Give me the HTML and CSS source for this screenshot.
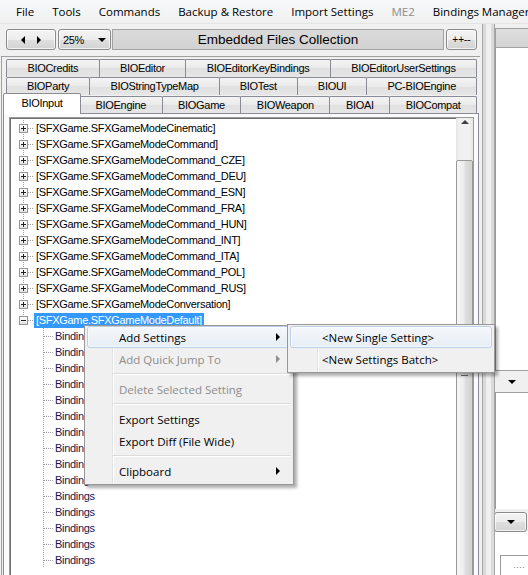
FILE: index.html
```html
<!DOCTYPE html>
<html lang="en">
<head>
  <meta charset="UTF-8" />
  <title>Bindings Editor</title>
  <link rel="stylesheet" href="styles.css">
</head>
<body>
  <div class="menubar">
    <span>File</span>
    <span>Tools</span>
    <span>Commands</span>
    <span>Backup &amp; Restore</span>
    <span>Import Settings</span>
    <span class="off">ME2</span>
    <span>Bindings Manager</span>
  </div>

  <div class="main">
    <div class="left">
      <div class="toolbar">
        <div class="btn nav"><i class="tri-l"></i><i class="tri-r"></i></div>
        <div class="btn combo"><span>25%</span><i class="tri-d"></i></div>
        <div class="caption">Embedded Files Collection</div>
        <div class="btn small">++--</div>
      </div>

      <div class="tabhost">
        <div class="tabrow r1">
          <span class="tab">BIOCredits</span>
          <span class="tab">BIOEditor</span>
          <span class="tab">BIOEditorKeyBindings</span>
          <span class="tab">BIOEditorUserSettings</span>
        </div>
        <div class="tabrow r2">
          <span class="tab">BIOParty</span>
          <span class="tab">BIOStringTypeMap</span>
          <span class="tab">BIOTest</span>
          <span class="tab">BIOUI</span>
          <span class="tab">PC-BIOEngine</span>
        </div>
        <div class="tabrow r3">
          <span class="tab active">BIOInput</span>
          <span class="tab">BIOEngine</span>
          <span class="tab">BIOGame</span>
          <span class="tab">BIOWeapon</span>
          <span class="tab">BIOAI</span>
          <span class="tab">BIOCompat</span>
        </div>

        <div class="tabpage">
          <div class="tree">
            <div class="tree-body">
              <div class="roots">
                <div class="node"><i class="exp"></i><span class="lbl">[SFXGame.SFXGameModeCinematic]</span></div>
                <div class="node"><i class="exp"></i><span class="lbl">[SFXGame.SFXGameModeCommand]</span></div>
                <div class="node"><i class="exp"></i><span class="lbl">[SFXGame.SFXGameModeCommand_CZE]</span></div>
                <div class="node"><i class="exp"></i><span class="lbl">[SFXGame.SFXGameModeCommand_DEU]</span></div>
                <div class="node"><i class="exp"></i><span class="lbl">[SFXGame.SFXGameModeCommand_ESN]</span></div>
                <div class="node"><i class="exp"></i><span class="lbl">[SFXGame.SFXGameModeCommand_FRA]</span></div>
                <div class="node"><i class="exp"></i><span class="lbl">[SFXGame.SFXGameModeCommand_HUN]</span></div>
                <div class="node"><i class="exp"></i><span class="lbl">[SFXGame.SFXGameModeCommand_INT]</span></div>
                <div class="node"><i class="exp"></i><span class="lbl">[SFXGame.SFXGameModeCommand_ITA]</span></div>
                <div class="node"><i class="exp"></i><span class="lbl">[SFXGame.SFXGameModeCommand_POL]</span></div>
                <div class="node"><i class="exp"></i><span class="lbl">[SFXGame.SFXGameModeCommand_RUS]</span></div>
                <div class="node"><i class="exp"></i><span class="lbl">[SFXGame.SFXGameModeConversation]</span></div>
                <div class="node sel"><i class="exp open"></i><span class="lbl">[SFXGame.SFXGameModeDefault]</span></div>
              </div>
              <div class="children">
                <div class="leaf"><span class="lbl">Bindings</span></div>
                <div class="leaf"><span class="lbl">Bindings</span></div>
                <div class="leaf"><span class="lbl">Bindings</span></div>
                <div class="leaf"><span class="lbl">Bindings</span></div>
                <div class="leaf"><span class="lbl">Bindings</span></div>
                <div class="leaf"><span class="lbl">Bindings</span></div>
                <div class="leaf"><span class="lbl">Bindings</span></div>
                <div class="leaf"><span class="lbl">Bindings</span></div>
                <div class="leaf"><span class="lbl">Bindings</span></div>
                <div class="leaf"><span class="lbl">Bindings</span></div>
                <div class="leaf"><span class="lbl">Bindings</span></div>
                <div class="leaf"><span class="lbl">Bindings</span></div>
                <div class="leaf"><span class="lbl">Bindings</span></div>
                <div class="leaf"><span class="lbl">Bindings</span></div>
                <div class="leaf"><span class="lbl">Bindings</span></div>
              </div>
            </div>
            <div class="vscroll">
              <div class="sb-up"><i class="tri-u"></i></div>
              <div class="sb-track"></div>
              <div class="sb-thumb"></div>
            </div>
          </div>
        </div>
      </div>
    </div>

    <div class="splitter"></div>

    <div class="right">
      <div class="r-head"></div>
      <div class="r-white"></div>
      <div class="r-strip"><i class="tri-d"></i></div>
      <div class="r-white short"></div>
      <div class="btn r-btn"><i class="tri-d"></i></div>
      <div class="r-bottom"><div class="mini">····</div></div>
    </div>
  </div>

  <!-- context menu opened on the selected node -->
  <div class="ctx">
    <div class="item hot">Add Settings<i class="tri-m"></i></div>
    <div class="item dis">Add Quick Jump To<i class="tri-m"></i></div>
    <div class="sep"></div>
    <div class="item dis">Delete Selected Setting</div>
    <div class="sep"></div>
    <div class="item">Export Settings</div>
    <div class="item">Export Diff (File Wide)</div>
    <div class="sep"></div>
    <div class="item">Clipboard<i class="tri-m"></i></div>
  </div>

  <div class="ctx sub">
    <div class="item hot">&lt;New Single Setting&gt;</div>
    <div class="item">&lt;New Settings Batch&gt;</div>
  </div>
</body>
</html>
```

FILE: styles.css
```css
body {
  margin: 0;
  width: 528px;
  height: 575px;
  overflow: hidden;
  position: relative;
  background: #f0f0f0;
  font-family: "Liberation Sans", Arial, sans-serif;
  font-size: 11px;
  color: #000;
}
i {
  display: block;
  font-style: normal;
}

/* menu bar */
.menubar {
  height: 23px;
  display: flex;
  align-items: center;
  padding-left: 7px;
  white-space: nowrap;
  overflow: hidden;
  font-family: "Open Sans", sans-serif;
  font-size: 11.5px;
  background: linear-gradient(#f7f8fa, #f0f0f0);
  border-bottom: 1px solid #e4e4e4;
}
.menubar span {
  padding: 0 9px;
  flex: none;
}
.menubar .off {
  color: #8d8d8d;
}

.main {
  display: flex;
  height: 551px;
}
.left {
  width: 482px;
  flex: none;
}

/* toolbar */
.toolbar {
  display: flex;
  height: 21px;
  margin: 5px 0 0 6px;
}
.btn {
  box-sizing: border-box;
  border: 1px solid #8a8a8a;
  border-radius: 3px;
  background: linear-gradient(#f4f4f4, #ececec 50%, #dfdfdf 50%, #d3d3d3);
  box-shadow: inset 0 0 0 1px rgba(255,255,255,0.7);
  display: flex;
  align-items: center;
}
.nav {
  width: 50px;
  margin-right: 2px;
  justify-content: center;
  gap: 12px;
}
.tri-l {
  border-right: 4px solid #000;
  border-top: 4px solid transparent;
  border-bottom: 4px solid transparent;
}
.tri-r, .tri-m {
  border-left: 4px solid #000;
  border-top: 4px solid transparent;
  border-bottom: 4px solid transparent;
}
.tri-d {
  border-top: 4px solid #000;
  border-left: 4px solid transparent;
  border-right: 4px solid transparent;
}
.tri-u {
  border-bottom: 4px solid #404040;
  border-left: 4px solid transparent;
  border-right: 4px solid transparent;
}
.combo {
  width: 53px;
  margin-right: 1px;
  padding: 0 4px;
  justify-content: space-between;
  letter-spacing: -0.4px;
}
.caption {
  box-sizing: border-box;
  width: 332px;
  margin-right: 2px;
  border: 1px solid #a3a3a3;
  background: linear-gradient(#dadada, #d2d2d2);
  text-align: center;
  line-height: 19px;
  font-size: 13.5px;
}
.small {
  width: 31px;
  justify-content: center;
  font-size: 10px;
}

/* tabs */
.tabhost {
  width: 478px;
  margin: 6px 0 0 1px;
  border-top: 1px solid #a0a0a0;
  border-left: 1px solid #a0a0a0;
}
.tabrow {
  display: flex;
  height: 18px;
  padding: 0 3px 0 4px;
}
.r1 {
  margin-top: 2px;
}
.r3 {
  padding-left: 1px;
  align-items: flex-end;
}
.tab {
  flex: 1 1 auto;
  box-sizing: border-box;
  height: 18px;
  margin-left: -1px;
  padding: 0 5px;
  border: 1px solid #898c95;
  border-bottom: 0;
  border-radius: 2px 2px 0 0;
  background: linear-gradient(#f4f4f4, #eaeaea 50%, #e0e0e0 50%, #e6e6e6);
  text-align: center;
  line-height: 16px;
  letter-spacing: -0.3px;
  white-space: nowrap;
}
.tab:first-child {
  margin-left: 0;
}
.r3 .tab {
  height: 17px;
}
.r3 .tab.active {
  height: 21px;
  margin-bottom: -1px;
  margin-right: -1px;
  padding: 0 7px;
  background: #fff;
  line-height: 18px;
  position: relative;
  z-index: 2;
}

.tabpage {
  box-sizing: border-box;
  width: 476px;
  height: 470px;
  margin-left: 1px;
  padding: 3px 4px 0 5px;
  border: 1px solid #898c95;
  background: #fbfbfb;
}

/* tree view */
.tree {
  box-sizing: border-box;
  height: 470px;
  display: flex;
  border: 1px solid #9a9a9a;
  box-shadow: inset 1px 1px 0 #707070;
  background: #fff;
}
.tree-body {
  flex: 1;
  padding-top: 2px;
}
.roots {
  background: repeating-linear-gradient(#a0a0a0 0 1px, transparent 1px 2px) 13px 0 / 1px 200px no-repeat;
}
.node {
  height: 16px;
  display: flex;
  align-items: center;
  padding-left: 9px;
  background: repeating-linear-gradient(to right, #a0a0a0 0 1px, transparent 1px 2px) 18px 8px / 6px 1px no-repeat;
}
.exp {
  box-sizing: border-box;
  width: 9px;
  height: 9px;
  margin-right: 6px;
  border: 1px solid #969696;
  background:
    linear-gradient(#222, #222) center / 5px 1px no-repeat,
    linear-gradient(#222, #222) center / 1px 5px no-repeat,
    linear-gradient(#fff, #e4e4e4);
}
.exp.open {
  background:
    linear-gradient(#222, #222) center / 5px 1px no-repeat,
    linear-gradient(#fff, #e4e4e4);
}
.lbl {
  padding: 0 2px;
  line-height: 15px;
  letter-spacing: -0.3px;
  white-space: nowrap;
}
.sel .lbl {
  background: #3399ff;
  color: #fff;
}
.children {
  background: repeating-linear-gradient(#a0a0a0 0 1px, transparent 1px 2px) 33px 0 / 1px 100% no-repeat;
}
.leaf {
  height: 16px;
  display: flex;
  align-items: center;
  padding-left: 43px;
  background: repeating-linear-gradient(to right, #a0a0a0 0 1px, transparent 1px 2px) 34px 8px / 9px 1px no-repeat;
}
.leaf .lbl {
  color: #16164f;
}

/* scrollbar */
.vscroll {
  width: 17px;
  flex: none;
  display: flex;
  flex-direction: column;
  background: linear-gradient(to right, #e4e4e4, #f1f1f1 3px, #f1f1f1 13px, #e9e9e9);
}
.sb-up {
  height: 20px;
  display: flex;
  align-items: center;
  justify-content: center;
}
.sb-track {
  height: 84px;
}
.sb-thumb {
  height: 426px;
  flex: none;
  box-sizing: border-box;
  border: 1px solid #999;
  border-radius: 2px;
  background:
    repeating-linear-gradient(#6e6e6e 0 1px, transparent 1px 3px) center 208px / 7px 7px no-repeat,
    linear-gradient(to right, #f6f6f6, #ededed 45%, #dedede 55%, #d2d2d2);
}

/* splitter + right panel */
.splitter {
  width: 13px;
  flex: none;
  box-sizing: border-box;
  border-left: 1px solid #a6a6a6;
  border-right: 1px solid #a6a6a6;
  background: linear-gradient(to right, #d9d9d9 0 3px, #f0f0f0 3px 8px, #dadada 8px);
}
.right {
  flex: 1;
  display: flex;
  flex-direction: column;
  overflow: hidden;
}
.right > div {
  flex: none;
}
.r-head {
  height: 20px;
  margin-top: 4px;
  box-sizing: border-box;
  border: 1px solid #a0a0a0;
  border-right: 0;
  background: linear-gradient(#dedede, #d3d3d3);
}
.r-white {
  height: 322px;
  background: #fff;
  border-left: 1px solid #9a9a9a;
}
.r-white.short {
  height: 116px;
}
.r-strip {
  height: 23px;
  box-sizing: border-box;
  border-top: 1px solid #a0a0a0;
  border-bottom: 1px solid #a0a0a0;
  display: flex;
  align-items: center;
  justify-content: center;
}
.r-btn {
  height: 20px;
  margin: 3px 1px 0 -1px;
  justify-content: center;
}
.right > .r-bottom {
  flex: 1;
  min-height: 0;
  background: #fff;
  padding: 23px 0 0 5px;
}
.mini {
  height: 40px;
  border: 1px solid #9a9a9a;
  border-right: 0;
  color: #777;
  font-size: 9px;
  padding: 6px 0 0 12px;
}

/* context menus */
.ctx {
  position: absolute;
  left: 84px;
  top: 325px;
  width: 210px;
  box-sizing: border-box;
  padding: 0 2px 2px;
  border: 1px solid #979797;
  background:
    linear-gradient(to right, transparent 27px, #e2e3e3 27px 28px, #fff 28px 29px, transparent 29px),
    #f0f0f0;
  box-shadow: 3px 3px 3px rgba(0,0,0,0.32);
  font-family: "Open Sans", sans-serif;
  font-size: 11.5px;
  z-index: 5;
}
.ctx .item {
  height: 22px;
  box-sizing: border-box;
  display: flex;
  align-items: center;
  padding: 0 10px 0 31px;
  border: 1px solid transparent;
  border-radius: 3px;
  white-space: nowrap;
}
.ctx .item i {
  margin-left: auto;
}
.ctx .hot {
  border-color: #b9cfe8;
  background: linear-gradient(#f5f8fc, #e6edf6);
  box-shadow: inset 0 0 0 1px rgba(255,255,255,0.6);
}
.ctx .dis {
  color: #8d8d8d;
}
.ctx .dis i {
  border-left-color: #8d8d8d;
}
.ctx .sep {
  height: 8px;
  margin-left: 26px;
  background:
    linear-gradient(#dcdcdc, #dcdcdc) 0 3px / 100% 1px no-repeat,
    linear-gradient(#fff, #fff) 0 4px / 100% 1px no-repeat;
}
.ctx.sub {
  left: 287px;
  top: 324px;
  width: 208px;
  padding-top: 1px;
  background:
    linear-gradient(to right, transparent 29px, #e2e3e3 29px 30px, #fff 30px 31px, transparent 31px),
    #f0f0f0;
  z-index: 6;
}
```
